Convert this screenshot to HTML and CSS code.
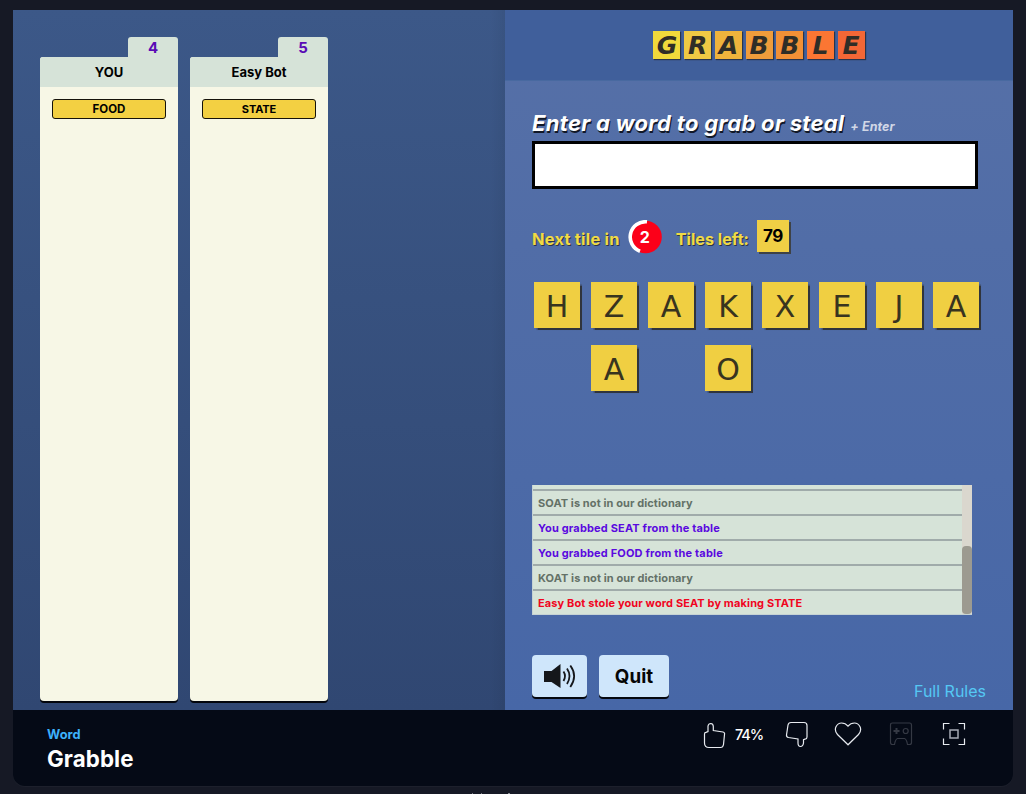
FILE: index.html
```html
<!DOCTYPE html>
<html lang="en">
<head>
<meta charset="utf-8">
<title>Grabble</title>
<link rel="stylesheet" href="styles.css">
</head>
<body>
<main class="frame">
  <div class="game">
    <section class="players">
      <div class="player">
        <div class="score">4</div>
        <div class="card">
          <div class="name">YOU</div>
          <div class="words"><div class="word">FOOD</div></div>
        </div>
      </div>
      <div class="player">
        <div class="score">5</div>
        <div class="card">
          <div class="name">Easy Bot</div>
          <div class="words"><div class="word word-tight">STATE</div></div>
        </div>
      </div>
    </section>
    <section class="play">
      <header class="banner">
        <div class="logo"><span class="l1">G</span><span class="l2">R</span><span class="l3">A</span><span class="l4">B</span><span class="l5">B</span><span class="l6">L</span><span class="l7">E</span></div>
      </header>
      <div class="board">
        <div class="prompt"><label class="prompt-main" for="entry">Enter a word to grab or steal</label><span class="prompt-key">+ Enter</span></div>
        <input class="entry" id="entry" type="text">
        <div class="status">
          <span class="status-text">Next tile in</span>
          <span class="timer">
            <svg class="ring" viewBox="0 0 34 34"><circle cx="17.500" cy="17" r="16.300" fill="#fc0019"/><path d="M19 1.800A15.300 15.300 0 0 0 12 31.300" fill="none" stroke="#fff" stroke-width="3.600"/></svg>
            <span class="timer-num">2</span>
          </span>
          <span class="status-text left-text">Tiles left:</span>
          <span class="count">79</span>
        </div>
        <div class="tiles">
          <span class="tile">H</span><span class="tile">Z</span><span class="tile">A</span><span class="tile">K</span><span class="tile">X</span><span class="tile">E</span><span class="tile">J</span><span class="tile">A</span>
          <span class="tile col2">A</span><span class="tile col4">O</span>
        </div>
        <div class="log">
          <div class="rows">
            <div class="row stub"></div>
            <div class="row muted">SOAT is not in our dictionary</div>
            <div class="row mine">You grabbed SEAT from the table</div>
            <div class="row mine">You grabbed FOOD from the table</div>
            <div class="row muted">KOAT is not in our dictionary</div>
            <div class="row theirs">Easy Bot stole your word SEAT by making STATE</div>
          </div>
          <div class="track"><div class="thumb"></div></div>
        </div>
        <div class="actions">
          <button class="btn btn-sound" aria-label="Sound"><svg width="34" height="28" viewBox="0 0 34 28"><path d="M1 9H8.500L17.500 2V26L8.500 20H1Z" fill="#15171b"/><path d="M20.500 9.500Q23.500 14 20.500 19M24 6.500Q29 14 24 22M27.300 3.500Q35 14 27.300 25" fill="none" stroke="#15171b" stroke-width="1.800"/></svg></button>
          <button class="btn btn-quit">Quit</button>
          <a class="rules">Full Rules</a>
        </div>
      </div>
    </section>
  </div>
  <footer class="bar">
    <div class="titles">
      <div class="category">Word</div>
      <div class="title">Grabble</div>
    </div>
    <div class="tools">
      <svg class="icon up" width="24" height="28" viewBox="0 0 24 28"><path d="M1.500 12Q1.500 10.500 3 10.400L5 9.500V4Q5.500 1.500 7.800 1.500Q10.300 1.800 10.300 4.500V8.500L20 10Q22 10.500 21.500 12.500L20.500 22.500Q20 25.500 17.500 25.500H6Q1.500 25.500 1.500 21Z"/></svg>
      <span class="rating">74%</span>
      <svg class="icon down" width="24" height="28" viewBox="0 0 24 28"><path d="M3 4Q3.500 1.500 6 1.500H19Q22 1.500 22 4.500V16Q22 18 20 18.200L18.500 18.700V22Q18 25.500 15.500 25.500Q13 25.500 13 22V18L3.500 16.500Q1.300 16 1.500 14Z"/></svg>
      <svg class="icon heart" width="28" height="24" viewBox="0 0 28 24"><path d="M14 22.800L3.500 12.500C-1.500 6.500 3.500 1 7.500 1Q11.500 1 14 4.200Q16.500 1 20.500 1C24.500 1 29.500 6.500 24.500 12.500Z"/></svg>
      <svg class="icon pad" width="24" height="24" viewBox="0 0 24 24"><path d="M3.500 1H20.500Q22.500 1 22.500 3V20.500Q22.500 22.500 20.500 22.500H18.500Q17.500 17 15.500 16.500H8.500Q6.500 17 5.500 22.500H3.500Q1.500 22.500 1.500 20.500V3Q1.500 1 3.500 1Z"/><path d="M7.500 6V12M4.500 9H10.500" stroke-width="2"/><circle cx="16.700" cy="9" r="2.500"/></svg>
      <svg class="icon full" width="24" height="24" viewBox="0 0 24 24"><path d="M1.500 7.500V1.500H7.500M16.500 1.500H22.500V7.500M22.500 16.500V22.500H16.500M7.500 22.500H1.500V16.500"/><rect x="8" y="8" width="8" height="8" stroke="#a6abb5" stroke-width="1.500"/></svg>
    </div>
  </footer>
</main>
<div class="specks"><i></i><i></i><i></i></div>
</body>
</html>
```
FILE: styles.css
```css
* { box-sizing: border-box; }
body {
  margin: 0;
  height: 794px;
  overflow: hidden;
  padding: 10px 13px 0;
  background: #161925;
  font-family: "Inter", "Liberation Sans", sans-serif;
  font-weight: 700;
}
.frame { width: 1000px; height: 776px; border-radius: 0 0 12px 12px; overflow: hidden; background: #050a16; box-shadow: 0 1px 0 #1d202c; }
.game { display: flex; height: 700px; }

.players {
  width: 492px;
  display: flex;
  gap: 12px;
  padding: 27px 27px 9px;
  background: linear-gradient(90deg, transparent 97%, rgba(0,0,0,.05)), linear-gradient(#3c5888, #304772);
}
.player { width: 138px; display: flex; flex-direction: column; }
.score {
  align-self: flex-end;
  width: 50px; height: 20px;
  border-radius: 3px 3px 0 0;
  background: #d6e3d8;
  color: #5a0bb5;
  font-size: 15px; line-height: 22px;
  text-align: center;
}
.card { flex: 1; display: flex; flex-direction: column; border-radius: 3px 0 4px 4px; overflow: hidden; background: #f7f7e6; box-shadow: 0 2px 0 #03060c; }
.name { height: 30px; background: #d6e3d8; font-size: 13px; line-height: 31px; text-align: center; }
.words { padding: 12px; }
.word { height: 20px; border: 1px solid #15120a; border-radius: 3px; background: #f3d042; font-size: 11.5px; line-height: 19px; text-align: center; }
.word-tight { font-size: 11px; letter-spacing: -.1px; }

.play { width: 508px; display: flex; flex-direction: column; background: linear-gradient(#5670a7, #4767a7); }
.banner { flex: none; height: 71px; display: flex; justify-content: center; padding-top: 21px; background: #405f9b; border-bottom: 1px solid #4869a0; }
.logo { display: flex; gap: 3.700px; }
.logo span {
  width: 27px; height: 28px;
  box-shadow: 1px 1px 1px #29344b;
  font: italic 700 25px/29px "DejaVu Sans", sans-serif;
  color: #2f2d27;
  text-align: center;
}
.l1 { background: #f1d93b; } .l2 { background: #efc944; } .l3 { background: #eeb33c; }
.l4 { background: #ef9c3b; } .l5 { background: #f29036; } .l6 { background: #fb7633; } .l7 { background: #f36736; }

.board { flex: 1; display: flex; flex-direction: column; padding: 26px 27px 0; }
.board > * { flex: none; }
.prompt { display: flex; align-items: baseline; height: 34px; font-style: italic; white-space: nowrap; }
.prompt-main { color: #fff; font-size: 22px; line-height: 32px; letter-spacing: .31px; text-shadow: 1px 2px 0 #111827; }
.prompt-key { margin-left: 6px; color: #d1d7e6; font-size: 12.500px; letter-spacing: .1px; }
.entry { width: 446px; height: 48px; border: 3px solid #000; background: #fff; padding: 0 10px; outline: none; font: 700 24px "Inter", sans-serif; }
.status { display: flex; height: 34px; margin-top: 31px; }
.status-text { color: #f0db45; font-size: 16.500px; letter-spacing: .2px; line-height: 38px; text-shadow: 1px 1px 0 #2b3447; white-space: nowrap; }
.left-text { margin-left: 14px; font-size: 16.200px; letter-spacing: 0; }
.timer { width: 34px; height: 34px; margin-left: 8px; display: grid; }
.timer > * { grid-area: 1 / 1; }
.ring { width: 34px; height: 34px; }
.timer-num { z-index: 1; color: #fff; font-size: 16px; line-height: 34px; text-align: center; }
.count { width: 32px; height: 32px; margin-left: 8px; background: #f0cf45; box-shadow: 2px 2px 0 #3e4246; font-size: 17px; letter-spacing: -.3px; line-height: 33px; text-align: center; }
.tiles { display: grid; grid-template-columns: repeat(8, 46px); grid-auto-rows: 46px; column-gap: 11px; row-gap: 17px; height: 109px; margin: 28px 0 0 2px; }
.tile { background: #f0cf42; box-shadow: 1.500px 1.500px 1px #30343c; color: #38341f; font: 400 30px/49px "DejaVu Sans", sans-serif; text-align: center; }
.col2 { grid-column: 2; } .col4 { grid-column: 4; }

.log { width: 440px; height: 130px; margin-top: 94px; display: flex; border: 1px solid #c6d3d4; border-width: 0 0 1px 1px; background: #d6e3d8; overflow: hidden; }
.rows { flex: 1; display: flex; flex-direction: column; }
.row { height: 25px; flex: none; padding-left: 5px; border-bottom: 2px solid #a0abaa; font-size: 11px; letter-spacing: .09px; line-height: 25px; white-space: nowrap; }
.row:last-child { border-bottom: 0; }
.stub { height: 6px; }
.muted { color: #647167; }
.mine { color: #5a09df; letter-spacing: .17px; }
.theirs { color: #f0051e; letter-spacing: .12px; }
.track { width: 10px; background: #dad7ce; display: flex; align-items: flex-end; }
.thumb { width: 10px; height: 68px; border-radius: 4px; background: #9c9a90; }

.actions { display: flex; margin-top: 40px; height: 46px; }
.btn { height: 42px; padding: 0; border: 0; border-radius: 4px; background: #cfe6fb; box-shadow: 0 2px 0 #05080f; color: #050505; font: 700 18.800px/43px "Inter", sans-serif; }
.btn-sound { width: 55px; display: grid; place-items: center; }
.btn-quit { width: 70px; margin-left: 12px; }
.rules { margin: 26px 0 0 auto; color: #55c8f4; font-size: 16px; font-weight: 400; line-height: 20px; }

.bar { height: 76px; display: flex; justify-content: space-between; padding: 0 47px 0 34px; }
.titles { padding-top: 16px; }
.category { color: #3db1fb; font-size: 12.800px; line-height: 17px; }
.title { color: #fff; font-size: 22.300px; line-height: 31px; letter-spacing: .1px; }
.tools { display: flex; padding-top: 12px; }
.icon { fill: none; stroke: #e8ebf0; stroke-width: 1.200; flex: none; }
.up { margin-top: 0; }
.rating { width: 32px; margin-left: 8px; color: #fff; font-size: 14.500px; font-weight: 500; letter-spacing: -1.100px; line-height: 26px; }
.down { margin: -1px 0 0 18px; }
.heart { margin-left: 25px; }
.pad { margin-left: 27px; stroke: #353944; }
.full { margin-left: 29px; }
.specks { display: flex; height: 1px; padding: 0 459px; margin-top: 7px; }
.specks i { flex: none; width: 1px; height: 1px; margin-right: 8px; background: #777982; }
.specks i:last-child { width: 2px; margin-left: 18px; background: #8d9097; }
```
